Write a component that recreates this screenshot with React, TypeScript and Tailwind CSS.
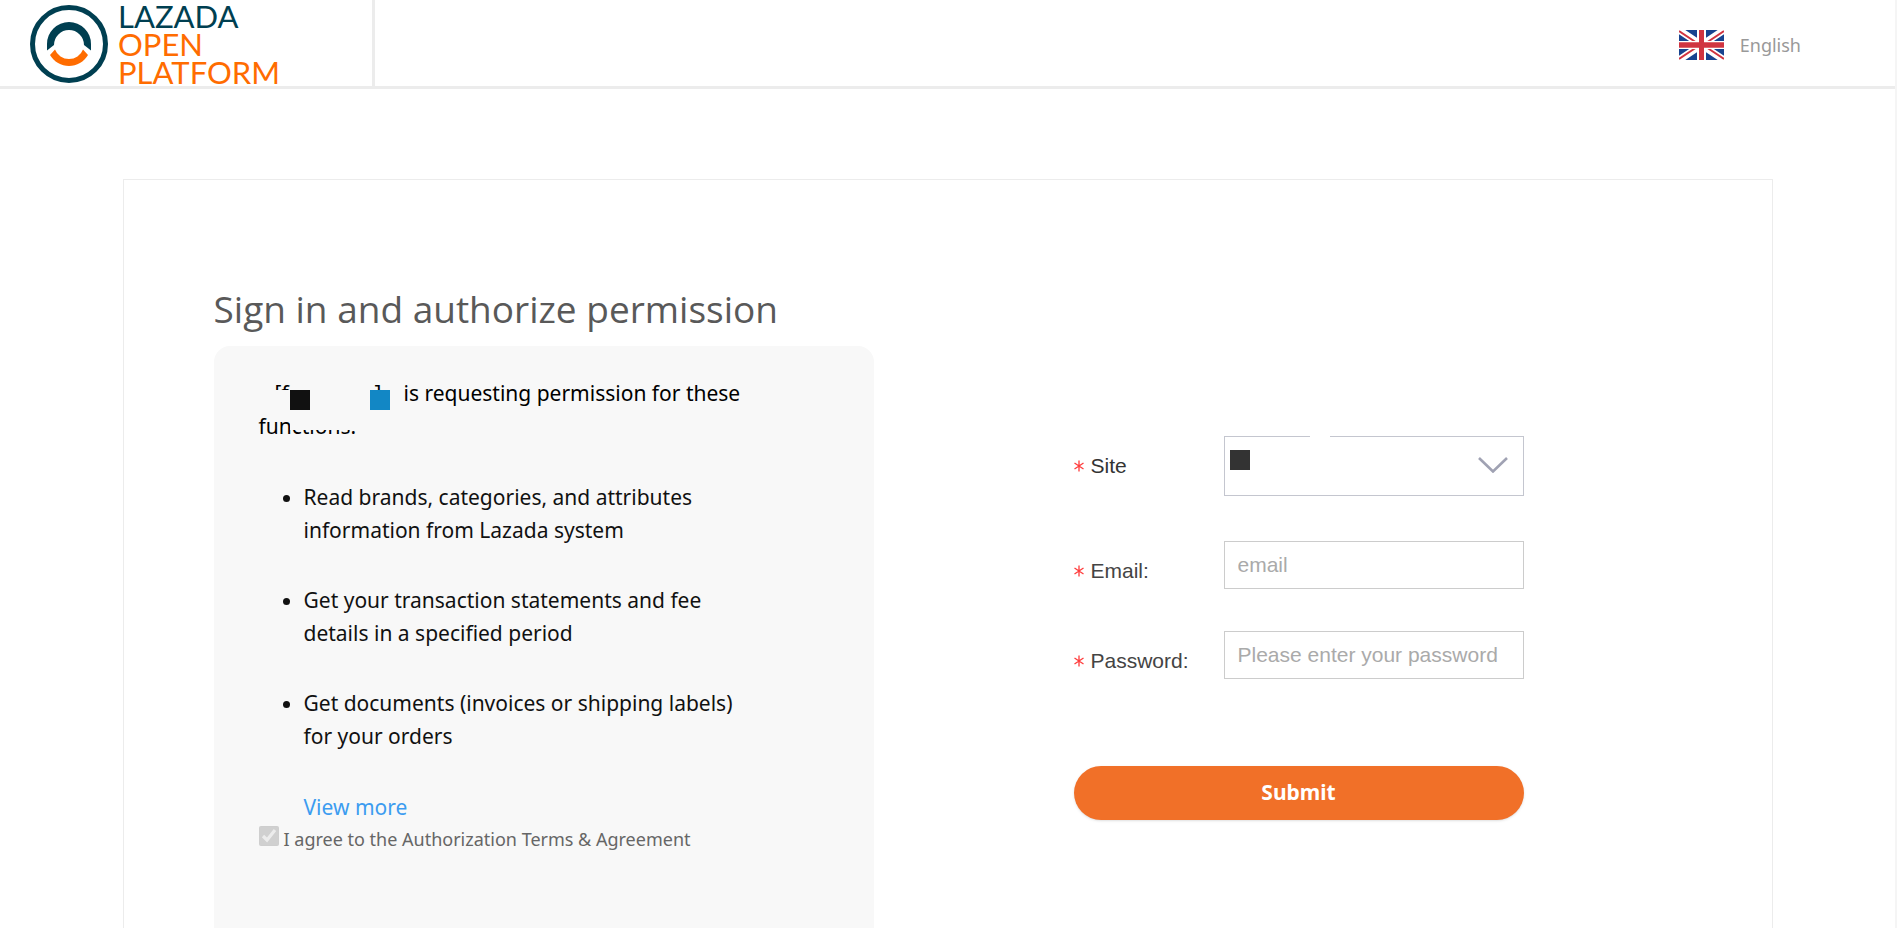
import React, { useState } from 'react';

const PERMISSIONS = [
  'Read brands, categories, and attributes information from Lazada system',
  'Get your transaction statements and fee details in a specified period',
  'Get documents (invoices or shipping labels) for your orders',
];

const Logo: React.FC = () => (
  <a href="#" className="flex items-center gap-2.5">
    <svg viewBox="0 0 78 78" className="size-[78px]" aria-hidden="true">
      <circle cx="39" cy="39" r="36.5" fill="none" stroke="#003f51" strokeWidth="5" />
      <path d="M17 45.5 V39 A22 22 0 0 1 61 39 V45.5 L54 40 A15 15 0 0 0 24 40 Z" fill="#003f51" />
      <path d="M25 44.5 A15 15 0 0 0 53 44.5 L58 50 A22 22 0 0 1 20 50 Z" fill="#ff6c00" />
    </svg>
    <span className="flex flex-col font-['Lato',sans-serif] text-[31px] leading-[28px] text-[#ff6c00]">
      <span className="text-[#003f51]">LAZADA</span>
      <span>OPEN</span>
      <span>PLATFORM</span>
    </span>
  </a>
);

const UkFlag: React.FC = () => (
  <svg viewBox="0 0 45 30" className="h-[30px] w-[45px]" aria-hidden="true">
    <rect width="45" height="30" fill="#17438f" />
    <path d="M0 0 L45 30 M45 0 L0 30" stroke="#fff" strokeWidth="7" />
    <path d="M0 1 L18 13 M45 1 L27 13 M0 29 L18 17 M45 29 L27 17" stroke="#d03440" strokeWidth="2" />
    <path d="M22.5 0 V30" stroke="#fff" strokeWidth="9" />
    <path d="M0 15 H45" stroke="#fff" strokeWidth="8" />
    <path d="M0 15 H45" stroke="#e79ba1" strokeWidth="6" />
    <path d="M22.5 0 V30 M0 15 H45" stroke="#d03440" strokeWidth="5" />
  </svg>
);

const Required: React.FC = () => (
  <svg viewBox="0 0 10 12" className="h-3 w-2.5" aria-hidden="true">
    <path d="M5 0.5 V11.5 M0.5 3 L9.5 9 M9.5 3 L0.5 9" stroke="#ff3b3b" strokeWidth="1.3" />
  </svg>
);

interface FieldLabelProps {
  htmlFor: string;
  className: string;
  children: React.ReactNode;
}

const FieldLabel: React.FC<FieldLabelProps> = ({ htmlFor, className, children }) => (
  <label htmlFor={htmlFor} className={`flex w-[150px] shrink-0 items-center gap-[7px] ${className}`}>
    <Required />
    {children}
  </label>
);

const App: React.FC = () => {
  const [email, setEmail] = useState('');
  const [password, setPassword] = useState('');

  return (
    <div className="flex min-h-screen flex-col border-r-2 border-[#f5f5f5] bg-white font-['Noto_Sans','Open_Sans',sans-serif]">
      {/* Header */}
      <header className="flex h-[89px] items-stretch justify-between border-b-3 border-[#ececec]">
        <div className="flex w-[375px] items-center border-r-3 border-[#ececec] pt-0.5 pl-[30px]">
          <Logo />
        </div>
        <button type="button" className="mr-[94px] flex items-center gap-4 pt-1 text-[18px] text-[#999]">
          <UkFlag />
          English
        </button>
      </header>

      <main className="mx-auto mt-[90px] flex w-full max-w-[1650px] flex-1 border border-b-0 border-[#ececec] px-[90px]">
        {/* Requested permissions */}
        <section className="flex w-[660px] shrink-0 flex-col pt-[104px]">
          <h1 className="font-['Open_Sans',sans-serif] text-[37px] leading-[50px] text-[#595959]">
            Sign in and authorize permission
          </h1>
          <div className="mt-3 flex-1 rounded-t-[16px] bg-[#f8f8f8] px-[45px] pt-[31px] text-[21px] leading-[33px] text-[#111]">
            <div className="relative w-[500px]">
              <p className="text-black">
                <span className="inline-flex w-[145px] pl-4">
                  <span className="w-[100px]">[f</span>]
                </span>
                is requesting permission for these functions.
              </p>
              {/* Masked application name */}
              <span className="absolute top-[13px] left-[11px] h-5 w-[130px] bg-[#f8f8f8]" />
              <span className="absolute top-[33px] left-[31px] h-5 w-[110px] bg-[#f8f8f8]" />
              <span className="absolute top-[13px] left-[31px] size-5 bg-[#111]" />
              <span className="absolute top-[13px] left-[111px] size-5 bg-[#1287c5]" />
            </div>

            <ul className="mt-[38px] flex w-[500px] list-disc flex-col gap-[37px] pl-[45px]">
              {PERMISSIONS.map((permission) => (
                <li key={permission}>{permission}</li>
              ))}
            </ul>

            <a href="#" className="mt-[38px] ml-[45px] block text-[#3c9cf0]">View more</a>

            <div className="flex items-start gap-[5px] text-[18px] leading-[30px] text-[#666]">
              <input id="agree" type="checkbox" checked disabled readOnly className="mt-0.5 size-5" />
              <label htmlFor="agree">I agree to the Authorization Terms &amp; Agreement</label>
            </div>
          </div>
        </section>

        {/* Sign in form */}
        <form
          className="ml-[200px] flex w-[450px] flex-col pt-[256px] font-['Liberation_Sans',Arial,sans-serif] text-[21px] text-[#444]"
          onSubmit={(e) => e.preventDefault()}
        >
          <div className="flex">
            <FieldLabel htmlFor="site" className="h-[60px] text-[#333]">Site</FieldLabel>
            <div className="relative flex-1">
              <select id="site" className="h-[60px] w-full appearance-none border border-[#c4c6cf] bg-white px-3">
                <option value="" />
              </select>
              <span className="absolute top-0 left-[86px] h-px w-5 bg-white" />
              <span className="absolute top-3.5 left-1.5 size-5 bg-[#333]" />
              <svg viewBox="0 0 30 16" className="pointer-events-none absolute top-[21px] right-4 h-4 w-[30px]" aria-hidden="true">
                <path d="M1 1 L15 14.5 L29 1" fill="none" stroke="#a0a2b3" strokeWidth="2.6" />
              </svg>
            </div>
          </div>

          <div className="mt-[45px] flex">
            <FieldLabel htmlFor="email" className="h-[60px]">Email:</FieldLabel>
            <input
              id="email"
              type="email"
              placeholder="email"
              value={email}
              onChange={(e) => setEmail(e.target.value)}
              className="h-12 w-full min-w-0 border border-[#ccc] px-[13px] placeholder:text-[#aaa]"
            />
          </div>

          <div className="mt-[30px] flex">
            <FieldLabel htmlFor="password" className="h-[60px]">Password:</FieldLabel>
            <input
              id="password"
              type="password"
              placeholder="Please enter your password"
              value={password}
              onChange={(e) => setPassword(e.target.value)}
              className="h-12 w-full min-w-0 border border-[#ccc] px-[13px] placeholder:text-[#aaa]"
            />
          </div>

          <button
            type="submit"
            className="mt-[75px] h-[54px] rounded-full bg-[#f17028] font-['Noto_Sans','Open_Sans',sans-serif] text-[21px] font-bold text-white shadow-sm"
          >
            Submit
          </button>
        </form>
      </main>
    </div>
  );
};

export default App;
